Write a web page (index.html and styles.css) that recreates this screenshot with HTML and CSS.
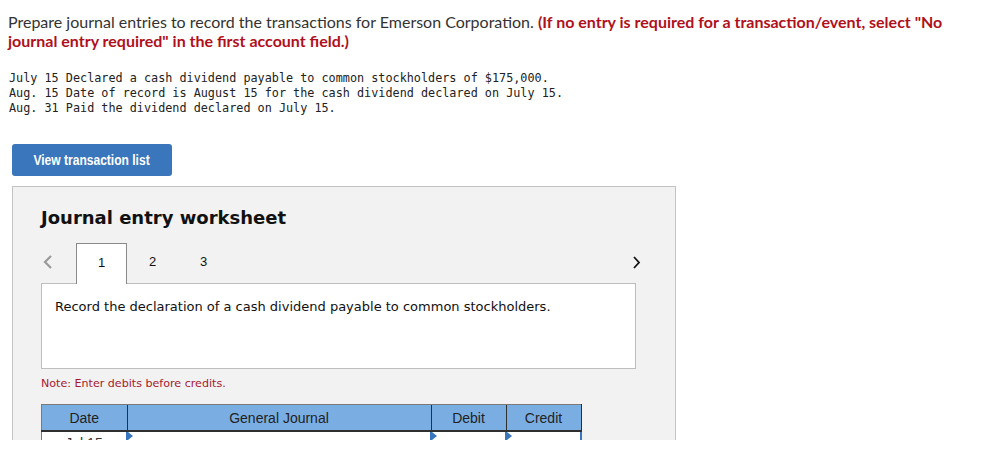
FILE: index.html
```html
<!DOCTYPE html>
<html lang="en">
<head>
<meta charset="utf-8">
<title>Journal entry worksheet</title>
<link rel="stylesheet" href="styles.css">
</head>
<body>
<div class="page">
  <p class="prompt">Prepare journal entries to record the transactions for Emerson Corporation. <strong class="warn">(If no entry is required for a transaction/event, select "No journal entry required" in the first account field.)</strong></p>

  <pre class="transactions">July 15 Declared a cash dividend payable to common stockholders of $175,000.
Aug. 15 Date of record is August 15 for the cash dividend declared on July 15.
Aug. 31 Paid the dividend declared on July 15.</pre>

  <button class="btn-view" type="button"><span class="btn-label">View transaction list</span></button>

  <section class="panel">
    <h2 class="panel-title">Journal entry worksheet</h2>

    <div class="tabs-row">
      <div class="tabs">
        <span class="chev chev-left">
          <svg width="10" height="16" viewBox="0 0 10 16"><path d="M8 2 L2 8 L8 14" fill="none" stroke="#9a9a9a" stroke-width="2.2"/></svg>
        </span>
        <span class="tab active">1</span>
        <span class="tab">2</span>
        <span class="tab">3</span>
      </div>
      <span class="chev chev-right">
        <svg width="9" height="15" viewBox="0 0 9 15"><path d="M2 2 L7 7.5 L2 13" fill="none" stroke="#111" stroke-width="1.8"/></svg>
      </span>
    </div>

    <div class="desc">Record the declaration of a cash dividend payable to common stockholders.</div>

    <p class="note">Note: Enter debits before credits.</p>

    <table class="journal">
      <thead>
        <tr>
          <th class="c-date">Date</th>
          <th class="c-gj">General Journal</th>
          <th class="c-debit">Debit</th>
          <th class="c-credit">Credit</th>
        </tr>
      </thead>
      <tbody>
        <tr>
          <td class="c-date">Jul 15</td>
          <td class="c-gj"><span class="tri"></span></td>
          <td class="c-debit"><span class="tri"></span></td>
          <td class="c-credit last"><span class="tri"></span></td>
        </tr>
      </tbody>
    </table>
  </section>
</div>
</body>
</html>
```

FILE: styles.css
```css
html, body {
  margin: 0;
  padding: 0;
  background: #fff;
}

.page {
  height: 440px;
  overflow: hidden;
  padding: 12px 0 0 8px;
  box-sizing: border-box;
  width: 975px;
}

.prompt {
  margin: 0;
  font-family: Lato, "Open Sans", sans-serif;
  font-size: 16px;
  line-height: 19px;
  color: #333;
}

.warn {
  color: #b0101c;
  font-weight: bold;
}

.transactions {
  margin: 21px 0 0 1px;
  font-family: "DejaVu Sans Mono", "Liberation Mono", monospace;
  font-size: 11.8px;
  line-height: 15px;
  color: #222;
}

.btn-view {
  display: flex;
  align-items: center;
  justify-content: center;
  margin: 28px 0 0 4px;
  width: 160px;
  height: 32px;
  border: none;
  border-radius: 3px;
  background: #3a76bb;
  color: #fff;
  font-family: "Liberation Sans", Arial, sans-serif;
  font-weight: bold;
  font-size: 14px;
  padding: 0;
  cursor: pointer;
}

.btn-label {
  display: inline-block;
  white-space: nowrap;
  transform: scaleX(0.86);
  margin-top: -1px;
}

.panel {
  margin: 10px 0 0 4px;
  width: 664px;
  height: 300px;
  box-sizing: border-box;
  background: #f2f2f2;
  border: 1px solid #c3c3c3;
  padding: 20px 39px 0 28px;
}

.panel-title {
  margin: 0;
  font-family: "DejaVu Sans", Verdana, sans-serif;
  font-weight: bold;
  font-size: 18px;
  line-height: 22px;
  color: #111;
}

.tabs-row {
  margin-top: 14px;
  display: flex;
  justify-content: space-between;
  align-items: stretch;
  height: 40px;
}

.tabs {
  display: flex;
  align-items: stretch;
}

.chev {
  display: flex;
  align-items: center;
}

.chev-left {
  width: 35px;
  padding-left: 2px;
  box-sizing: border-box;
  margin-top: -2px;
}

.chev-right {
  margin-right: -5px;
  margin-top: -2px;
}

.tab {
  width: 51px;
  box-sizing: border-box;
  display: flex;
  align-items: center;
  justify-content: center;
  padding-bottom: 4px;
  font-family: "Liberation Sans", Arial, sans-serif;
  font-size: 13px;
  color: #111;
  border: 1px solid transparent;
  border-bottom: none;
}

.tab.active {
  background: #fff;
  border-color: #8a8a8a;
  position: relative;
  z-index: 1;
  height: 41px;
}

.desc {
  height: 86px;
  box-sizing: border-box;
  background: #fff;
  border: 1px solid #bdbdbd;
  padding: 14px 13px;
  font-family: "DejaVu Sans", Verdana, sans-serif;
  font-size: 13px;
  line-height: 18px;
  color: #111;
}

.note {
  margin: 8px 0 0;
  font-family: "DejaVu Sans", Verdana, sans-serif;
  font-size: 11.1px;
  line-height: 14px;
  color: #a8192e;
}

.journal {
  margin-top: 13px;
  border-collapse: collapse;
  table-layout: fixed;
}

.journal th {
  height: 25px;
  padding: 0;
  background: #7aaee3;
  font-family: "Liberation Sans", Arial, sans-serif;
  font-weight: normal;
  font-size: 14px;
  color: #222;
  border-top: 1px solid #7a7a7a;
  border-left: 1px solid #2f2f2f;
  border-bottom: 2px solid #2f2f2f;
  text-align: center;
}

.journal th:first-child {
  border-left: 1px solid #7a7a7a;
}

.journal th:last-child {
  border-right: 1px solid #2f2f2f;
}

.c-date { width: 84px; }
.c-gj { width: 302px; }
.c-debit { width: 73px; }
.c-credit { width: 73px; }

.journal td {
  height: 30px;
  padding: 0;
  background: #fff;
  vertical-align: top;
  position: relative;
  border-left: 2px solid #3a76bb;
  font-family: "Liberation Sans", Arial, sans-serif;
  font-size: 14px;
  line-height: 16px;
  color: #333;
}

.journal td.c-date {
  border-left: 1px solid #7a7a7a;
  text-align: center;
  padding-top: 3px;
}

.journal td.last {
  border-right: 2px solid #3a76bb;
}

.tri {
  position: absolute;
  left: 0;
  top: 0;
  width: 0;
  height: 0;
  border-top: 4px solid transparent;
  border-bottom: 4px solid transparent;
  border-left: 5px solid #3a76bb;
}
```
